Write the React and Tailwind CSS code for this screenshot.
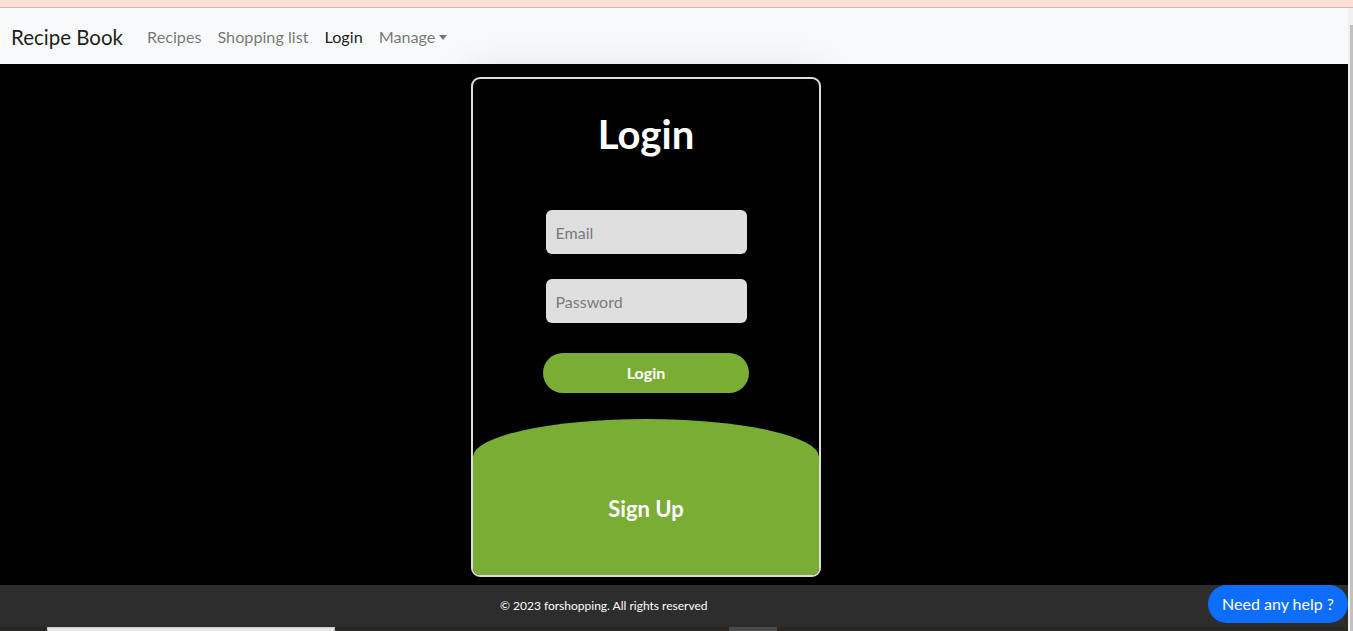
export default function App() {
  const font = { fontFamily: 'Lato, "Open Sans", sans-serif' };
  return (
    <div className="relative h-[631px] overflow-hidden bg-[#2a2620] font-['Lato','Open_Sans',sans-serif]">
      <div className="h-[8px] bg-[#f9e0d9] border-b border-[#d6b9b1]"></div>
      <div className="flex">
        <div className="flex-1">
          {/* navbar */}
          <nav className="h-[56px] bg-[#f8f9fa] flex items-center px-[11px] pt-[1px]">
            <a className="text-[20.5px] text-black/90 mr-[16px] leading-[30px]">Recipe Book</a>
            <ul className="flex text-[16.2px] pt-[1px]">
              <li className="px-[8px] text-black/55">Recipes</li>
              <li className="px-[8px] text-black/55">Shopping list</li>
              <li className="px-[8px] text-black/90">Login</li>
              <li className="px-[8px] text-black/55 flex items-center">
                Manage
                <span className="ml-[4px] mt-[2px] w-0 h-0 border-t-[5px] border-t-[#777] border-x-[4px] border-x-transparent"></span>
              </li>
            </ul>
          </nav>

          {/* main */}
          <main className="h-[521px] bg-black pt-[13px]">
            <div className="ml-[471px] w-[350px] h-[500px] border-2 border-[#dcdcdc] rounded-[9px] bg-black shadow-[0_0_40px_rgba(0,0,0,0.18)] flex flex-col items-center overflow-hidden">
              <h1 className="mt-[30px] text-[40px] leading-[50px] font-bold text-white">Login</h1>
              <input
                placeholder="Email"
                className="mt-[51px] w-[201px] h-[44px] rounded-[6px] bg-[#e0dfdf] px-[10px] text-[16px] placeholder:text-[#7a7a7a] outline-none"
              />
              <input
                placeholder="Password"
                type="password"
                className="mt-[25px] w-[201px] h-[44px] rounded-[6px] bg-[#e0dfdf] px-[10px] text-[16px] placeholder:text-[#7a7a7a] outline-none"
              />
              <button className="mt-[30px] w-[206px] h-[40px] rounded-full bg-[#7aad34] text-white font-bold text-[16px]">
                Login
              </button>
              <div className="mt-[26px] w-full flex-1 bg-[#7aad34] rounded-t-[50%_38px] flex items-center justify-center pt-[23px]">
                <span className="text-white font-bold text-[22px]">Sign Up</span>
              </div>
            </div>
          </main>

          {/* footer */}
          <footer className="h-[42px] bg-[#2d2d2d] flex items-center pl-[500px]">
            <p className="text-[12px] text-white">© 2023 forshopping. All rights reserved</p>
          </footer>
          <div className="h-[4px] relative">
            <div className="absolute left-[47px] w-[288px] h-[4px] bg-[#e6e6e6] border-t border-x border-[#c8c8c8]"></div>
            <div className="absolute left-[729px] w-[48px] h-[4px] bg-[#4a4a4a]"></div>
          </div>
        </div>
        {/* scrollbar */}
        <div className="w-[5px] bg-[#f0f0f0] pt-[17px] flex justify-end">
          <div className="w-[3px] h-full bg-[#c1c1c1]"></div>
        </div>
      </div>

      <button
        style={font}
        className="absolute left-[1208px] top-[585px] w-[140px] h-[38px] rounded-full bg-[#0d6efd] text-white text-[16px]"
      >
        Need any help ?
      </button>
    </div>
  );
}
